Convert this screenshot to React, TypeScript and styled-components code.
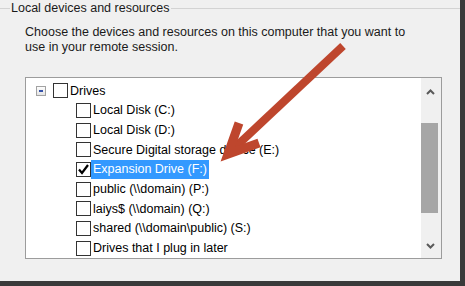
import React from 'react';
import styled, { createGlobalStyle } from 'styled-components';

const GlobalStyle = createGlobalStyle`
  html, body {
    margin: 0;
    padding: 0;
    background: #3a3a3a;
  }
  body {
    font-family: "Liberation Sans", Arial, sans-serif;
  }
`;

const Page = styled.div`
  position: relative;
  width: 465px;
  height: 286px;
  background: #3a3a3a;
  overflow: hidden;
`;

const Panel = styled.div`
  width: 460px;
  height: 281px;
  background: #f0f0f0;
  display: flex;
  flex-direction: column;
  color: #1a1a1a;
  font-size: 12.5px;
`;

const GroupHeader = styled.div`
  display: flex;
  align-items: center;
  height: 16px;
`;

const Rule = styled.div<{ $grow?: boolean }>`
  height: 1px;
  background: #d3d3d3;
  width: ${(p) => (p.$grow ? 'auto' : '10px')};
  flex: ${(p) => (p.$grow ? 1 : 'none')};
`;

const Legend = styled.span`
  padding: 0 2px 0 1px;
  line-height: 16px;
`;

const Description = styled.p`
  margin: 9px 0 0 25px;
  line-height: 15px;
`;

const TreeBox = styled.div`
  box-sizing: border-box;
  margin: 22px 0 0 25px;
  width: 417px;
  height: 182px;
  border: 1px solid #9c9c9c;
  background: #fff;
  display: flex;
`;

const TreeList = styled.div`
  flex: 1;
  padding-top: 3px;
  overflow: hidden;
  color: #000;
`;

const Row = styled.div<{ $indent: number }>`
  display: flex;
  align-items: center;
  height: 19.67px;
  padding-left: ${(p) => p.$indent}px;
`;

const Expander = styled.span`
  box-sizing: border-box;
  width: 10px;
  height: 10px;
  border: 1px solid #a2a2a2;
  background: linear-gradient(#fdfdfd, #e4e4e4);
  display: flex;
  align-items: center;
  justify-content: center;
  margin-right: 7px;
  &::after {
    content: '';
    width: 4px;
    height: 1.5px;
    background: #3552a8;
  }
`;

const Box = styled.span`
  box-sizing: border-box;
  width: 15px;
  height: 15px;
  border: 1px solid #333;
  background: #fff;
  display: flex;
  align-items: center;
  justify-content: center;
  flex: none;
`;

const Label = styled.span<{ $selected?: boolean }>`
  display: flex;
  align-items: center;
  height: 100%;
  padding: 0 2px;
  white-space: nowrap;
  background: ${(p) => (p.$selected ? '#3399ff' : 'transparent')};
  color: ${(p) => (p.$selected ? '#fff' : '#000')};
`;

const Scrollbar = styled.div`
  width: 20px;
  background: #f0f0f0;
  display: flex;
  flex-direction: column;
`;

const ScrollButton = styled.div<{ $h: number }>`
  height: ${(p) => p.$h}px;
  display: flex;
  align-items: center;
  justify-content: center;
  padding-right: 2px;
`;

const Track = styled.div`
  flex: 1;
  padding-top: 17px;
`;

const Thumb = styled.div`
  width: 17px;
  height: 90px;
  background: #a6a6a6;
`;

const ArrowOverlay = styled.svg`
  position: absolute;
  left: 0;
  top: 0;
  pointer-events: none;
`;

const Chevron = ({ up }: { up?: boolean }) => (
  <svg width="9" height="6" viewBox="0 0 9 6">
    <polyline
      points={up ? '1,5 4.5,1.5 8,5' : '1,1 4.5,4.5 8,1'}
      fill="none"
      stroke="#5a5a5a"
      strokeWidth="2"
    />
  </svg>
);

const Check = () => (
  <svg width="13" height="13" viewBox="0 0 13 13">
    <polyline points="2,6.5 5,10 11,2" fill="none" stroke="#000" strokeWidth="2.2" />
  </svg>
);

const drives: { label: string; checked?: boolean }[] = [
  { label: 'Local Disk (C:)' },
  { label: 'Local Disk (D:)' },
  { label: 'Secure Digital storage device (E:)' },
  { label: 'Expansion Drive (F:)', checked: true },
  { label: 'public (\\\\domain) (P:)' },
  { label: 'laiys$ (\\\\domain) (Q:)' },
  { label: 'shared (\\\\domain\\public) (S:)' },
  { label: 'Drives that I plug in later' },
];

export default function App() {
  return (
    <Page>
      <GlobalStyle />
      <Panel>
        <GroupHeader>
          <Rule />
          <Legend>Local devices and resources</Legend>
          <Rule $grow />
        </GroupHeader>
        <Description>
          Choose the devices and resources on this computer that you want to
          <br />
          use in your remote session.
        </Description>
        <TreeBox>
          <TreeList>
            <Row $indent={10}>
              <Expander />
              <Box />
              <Label>Drives</Label>
            </Row>
            {drives.map((d) => (
              <Row key={d.label} $indent={50}>
                <Box>{d.checked && <Check />}</Box>
                <Label $selected={d.checked}>{d.label}</Label>
              </Row>
            ))}
          </TreeList>
          <Scrollbar>
            <ScrollButton $h={28}>
              <Chevron up />
            </ScrollButton>
            <Track>
              <Thumb />
            </Track>
            <ScrollButton $h={24}>
              <Chevron />
            </ScrollButton>
          </Scrollbar>
        </TreeBox>
      </Panel>
      <ArrowOverlay width="465" height="286" viewBox="0 0 465 286">
        <line x1="343" y1="46" x2="228" y2="154" stroke="#be462d" strokeWidth="8" />
        <polyline
          points="239,123 228,154 259,143"
          fill="none"
          stroke="#be462d"
          strokeWidth="9"
          strokeLinejoin="miter"
        />
      </ArrowOverlay>
    </Page>
  );
}
